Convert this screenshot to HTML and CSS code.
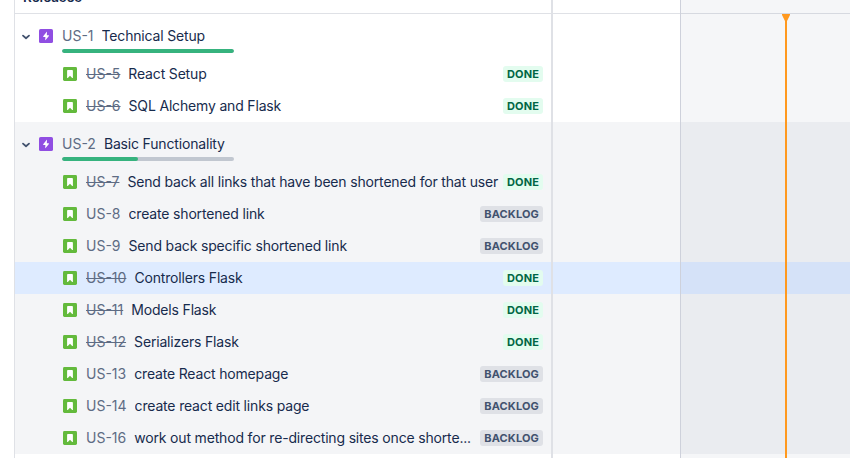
FILE: index.html
```
<!DOCTYPE html>
<html lang="en">
<head>
<meta charset="utf-8">
<title>Roadmap</title>
<link rel="stylesheet" href="styles.css">
</head>
<body>
<svg width="0" height="0" class="defs">
  <symbol id="chevron" viewBox="0 0 10 8"><path d="M2 2.600 5 5.200 8 2.600" fill="none" stroke="#42526e" stroke-width="1.800" stroke-linecap="round" stroke-linejoin="round"/></symbol>
  <symbol id="epic" viewBox="0 0 14 14"><rect width="14" height="14" rx="1.6" fill="#904ee2"/><path d="M7.6 3 4.2 7.3c-.2.3 0 .6.3.6h1.9L6.2 11c0 .3.2.3.4.1L9.9 6.9c.2-.3 0-.6-.3-.6H7.8L8 3.1C8 2.800 7.800 2.800 7.600 3z" fill="#fff"/></symbol>
  <symbol id="story" viewBox="0 0 14 14"><rect width="14" height="14" rx="1.4" fill="#63ba3c"/><path d="M4.100 10.700V4c0-.6.4-1 1-1h3.800c.6 0 1 .4 1 1v6.700c0 .4-.4.500-.7.200L7 8.700l-2.200 2.200c-.3.300-.7.200-.7-.2z" fill="#fff"/></symbol>
</svg>
<main class="roadmap">
  <header class="header">Releases</header>
  <section class="group">
    <div class="epic">
      <svg class="chevron"><use href="#chevron"/></svg>
      <svg class="icon"><use href="#epic"/></svg>
      <div class="epic-body">
        <div class="epic-title"><span class="key">US-1</span><span class="summary">Technical Setup</span></div>
        <div class="progress"><div class="bar" style="width:100%"></div></div>
      </div>
    </div>
    <div class="row"><svg class="icon"><use href="#story"/></svg><span class="key closed">US-5</span><span class="summary">React Setup</span><span class="tag done">DONE</span></div>
    <div class="row"><svg class="icon"><use href="#story"/></svg><span class="key closed">US-6</span><span class="summary">SQL Alchemy and Flask</span><span class="tag done">DONE</span></div>
  </section>
  <section class="group shaded">
    <div class="epic">
      <svg class="chevron"><use href="#chevron"/></svg>
      <svg class="icon"><use href="#epic"/></svg>
      <div class="epic-body">
        <div class="epic-title"><span class="key">US-2</span><span class="summary">Basic Functionality</span></div>
        <div class="progress"><div class="bar" style="width:44.4%"></div></div>
      </div>
    </div>
    <div class="row"><svg class="icon"><use href="#story"/></svg><span class="key closed">US-7</span><span class="summary">Send back all links that have been shortened for that user</span><span class="tag done">DONE</span></div>
    <div class="row"><svg class="icon"><use href="#story"/></svg><span class="key">US-8</span><span class="summary">create shortened link</span><span class="tag">BACKLOG</span></div>
    <div class="row"><svg class="icon"><use href="#story"/></svg><span class="key">US-9</span><span class="summary">Send back specific shortened link</span><span class="tag">BACKLOG</span></div>
    <div class="row selected"><svg class="icon"><use href="#story"/></svg><span class="key closed">US-10</span><span class="summary">Controllers Flask</span><span class="tag done">DONE</span></div>
    <div class="row"><svg class="icon"><use href="#story"/></svg><span class="key closed">US-11</span><span class="summary">Models Flask</span><span class="tag done">DONE</span></div>
    <div class="row"><svg class="icon"><use href="#story"/></svg><span class="key closed">US-12</span><span class="summary">Serializers Flask</span><span class="tag done">DONE</span></div>
    <div class="row"><svg class="icon"><use href="#story"/></svg><span class="key">US-13</span><span class="summary">create React homepage</span><span class="tag">BACKLOG</span></div>
    <div class="row"><svg class="icon"><use href="#story"/></svg><span class="key">US-14</span><span class="summary">create react edit links page</span><span class="tag">BACKLOG</span></div>
    <div class="row"><svg class="icon"><use href="#story"/></svg><span class="key">US-16</span><span class="summary">work out method for re-directing sites once shorte...</span><span class="tag">BACKLOG</span></div>
  </section>
  <div class="month"></div>
  <div class="divider"></div>
  <svg class="today" viewBox="0 0 8 445"><path d="M0 0h8v1L5 7v438H3V7L0 1z" fill="#ff991f"/></svg>
</main>
</body>
</html>
```
FILE: styles.css
```
* { box-sizing: border-box; }

body {
  margin: 0;
  background: #fff;
  color: #172b4d;
  font: 14px/20px Inter, sans-serif;
}

.defs { display: block; width: 0; height: 0; }

.roadmap {
  position: relative;
  height: 458px;
  margin-left: 14px;
  border-left: 1px solid #dfe1e6;
  overflow: hidden;
}

.header {
  display: flex;
  align-items: flex-end;
  height: 14px;
  padding: 0 0 8px 8px;
  border-bottom: 1px solid #dfe1e6;
  font-size: 13.5px;
  font-weight: 600;
  line-height: 16px;
}

.shaded { background: #f4f5f7; }

.epic {
  display: flex;
  height: 44px;
  padding: 12px 0 0 6px;
}

.chevron { width: 10px; height: 8px; margin: 7px 8px 0 0; }
.icon { flex: none; width: 14px; height: 14px; }
.epic .icon { margin: 3px 9px 0 0; }
.epic-body { width: 172px; }
.epic-title { display: flex; gap: 8px; white-space: nowrap; }

.progress {
  height: 4px;
  margin-top: 3px;
  border-radius: 2px;
  background: #c1c7d0;
  overflow: hidden;
}

.bar { height: 4px; border-radius: 2px; background: #36b37e; }

.row {
  display: flex;
  align-items: center;
  height: 32px;
  padding: 0 307px 0 48px;
}

.selected { background: #deebff; }
.key { flex: none; color: #5e6c84; }
.row .key { margin: 0 8px 0 9px; }
.closed { text-decoration: line-through; }

.summary {
  min-width: 0;
  letter-spacing: -0.17px;
  overflow: hidden;
  text-overflow: ellipsis;
  white-space: nowrap;
}

.row .summary { flex: 1; }

.tag {
  flex: none;
  height: 16px;
  margin-left: 3px;
  padding: 0 4px;
  border-radius: 3px;
  background: #dfe1e6;
  color: #42526e;
  font-size: 11px;
  font-weight: 700;
  letter-spacing: 0.15px;
  line-height: 16px;
}

.done { background: #e3fcef; color: #006644; }

.month {
  position: absolute;
  top: 0;
  right: 0;
  bottom: 0;
  left: 665px;
  border-left: 1px solid #ced1db;
  background: rgba(9, 30, 66, 0.04);
}

.divider {
  position: absolute;
  top: 0;
  bottom: 0;
  left: 536px;
  width: 2px;
  background: #dfe1e6;
}

.today {
  position: absolute;
  top: 14px;
  left: 767px;
  width: 8px;
  height: 445px;
}
```
